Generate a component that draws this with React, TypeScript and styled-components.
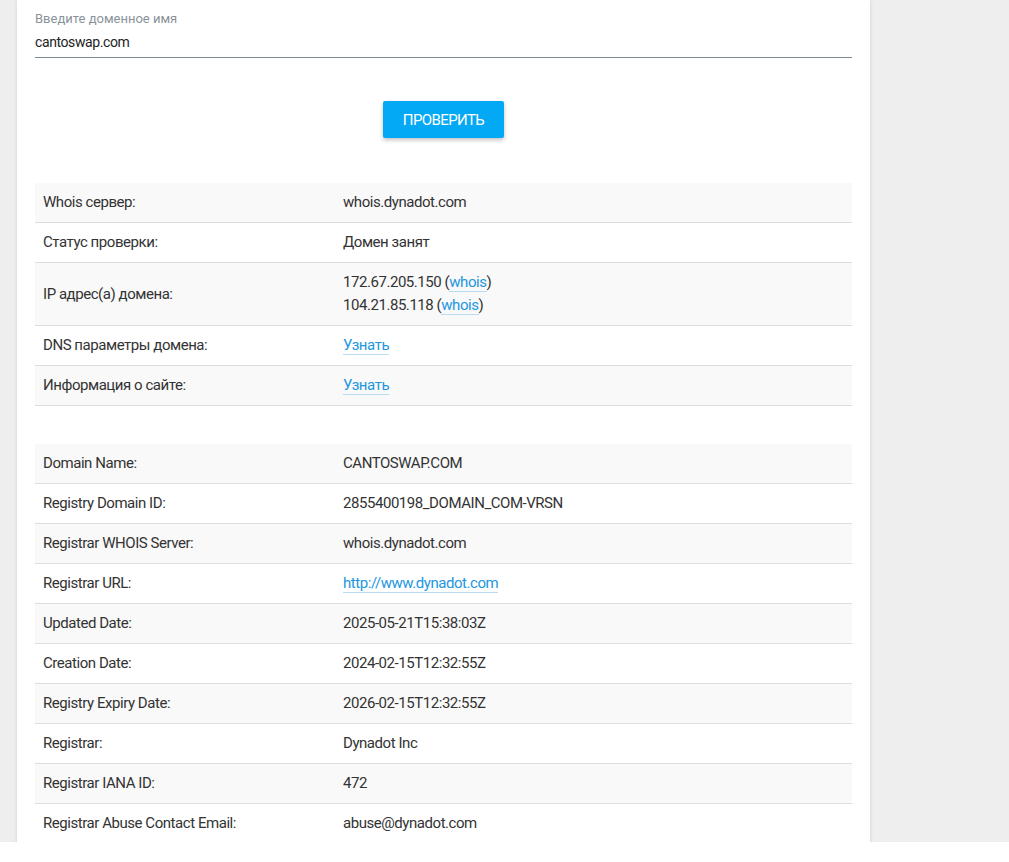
import styled, { createGlobalStyle } from 'styled-components';

const GlobalStyle = createGlobalStyle`
  html, body {
    margin: 0;
    background: #fff;
  }
  * {
    box-sizing: border-box;
  }
`;

const Page = styled.div`
  height: 842px;
  overflow: hidden;
  background: #eeeeee;
  padding-left: 17px;
  display: flex;
  align-items: flex-start;
`;

const Card = styled.main`
  width: 853px;
  min-height: 100%;
  background: #fff;
  box-shadow: 0 0 4px rgba(0, 0, 0, 0.12);
  padding: 10px 18px 0;
  font-family: Roboto, 'Liberation Sans', sans-serif;
  color: #333;
`;

const Field = styled.label`
  display: flex;
  flex-direction: column;
`;

const FieldLabel = styled.span`
  font-size: 13px;
  line-height: 18px;
  color: #8a939a;
`;

const Input = styled.input`
  border: none;
  border-bottom: 1px solid #7d8b94;
  outline: none;
  padding: 4px 0 5px;
  margin: 0;
  font-family: inherit;
  font-size: 14px;
  line-height: 20px;
  color: #222;
  letter-spacing: -0.4px;
  background: transparent;
`;

const Actions = styled.div`
  display: flex;
  justify-content: center;
  padding: 43px 0 45px;
`;

const Button = styled.button`
  width: 121px;
  height: 37px;
  border: none;
  border-radius: 2px;
  background: #03a9f4;
  color: #fff;
  font-family: inherit;
  font-size: 15px;
  letter-spacing: -0.6px;
  text-transform: uppercase;
  box-shadow: 0 2px 4px rgba(0, 0, 0, 0.25);
  cursor: pointer;
`;

const Table = styled.table<{ $gap?: boolean }>`
  width: 100%;
  border-collapse: collapse;
  font-size: 15px;
  letter-spacing: -0.45px;
  margin-bottom: ${(p) => (p.$gap ? '38px' : '0')};

  tr:nth-child(odd) {
    background: #f9f9f9;
  }
  tr + tr td {
    border-top: 1px solid #dddddd;
  }
  tbody:last-child tr:last-child td {
    border-bottom: 1px solid #dddddd;
  }
`;

const Label = styled.td`
  width: 300px;
  padding: 8px 8px;
  line-height: 23px;
  vertical-align: middle;
`;

const Value = styled.td`
  padding: 8px 8px;
  line-height: 23px;
  vertical-align: middle;
`;

const Link = styled.a`
  color: #2196e0;
  text-decoration: none;
  border-bottom: 1px solid #b7dcf3;
`;

type Row = { label: string; value: React.ReactNode };

const checkRows: Row[] = [
  { label: 'Whois сервер:', value: 'whois.dynadot.com' },
  { label: 'Статус проверки:', value: 'Домен занят' },
  {
    label: 'IP адрес(а) домена:',
    value: (
      <>
        172.67.205.150 (<Link href="#">whois</Link>)
        <br />
        104.21.85.118 (<Link href="#">whois</Link>)
      </>
    ),
  },
  { label: 'DNS параметры домена:', value: <Link href="#">Узнать</Link> },
  { label: 'Информация о сайте:', value: <Link href="#">Узнать</Link> },
];

const whoisRows: Row[] = [
  { label: 'Domain Name:', value: 'CANTOSWAP.COM' },
  { label: 'Registry Domain ID:', value: '2855400198_DOMAIN_COM-VRSN' },
  { label: 'Registrar WHOIS Server:', value: 'whois.dynadot.com' },
  { label: 'Registrar URL:', value: <Link href="#">http://www.dynadot.com</Link> },
  { label: 'Updated Date:', value: '2025-05-21T15:38:03Z' },
  { label: 'Creation Date:', value: '2024-02-15T12:32:55Z' },
  { label: 'Registry Expiry Date:', value: '2026-02-15T12:32:55Z' },
  { label: 'Registrar:', value: 'Dynadot Inc' },
  { label: 'Registrar IANA ID:', value: '472' },
  { label: 'Registrar Abuse Contact Email:', value: 'abuse@dynadot.com' },
];

function InfoTable({ rows, gap }: { rows: Row[]; gap?: boolean }) {
  return (
    <Table $gap={gap}>
      <tbody>
        {rows.map((r) => (
          <tr key={r.label}>
            <Label>{r.label}</Label>
            <Value>{r.value}</Value>
          </tr>
        ))}
      </tbody>
    </Table>
  );
}

export default function App() {
  return (
    <>
      <GlobalStyle />
      <Page>
        <Card>
          <Field>
            <FieldLabel>Введите доменное имя</FieldLabel>
            <Input defaultValue="cantoswap.com" />
          </Field>
          <Actions>
            <Button type="button">Проверить</Button>
          </Actions>
          <InfoTable rows={checkRows} gap />
          <InfoTable rows={whoisRows} />
        </Card>
      </Page>
    </>
  );
}
